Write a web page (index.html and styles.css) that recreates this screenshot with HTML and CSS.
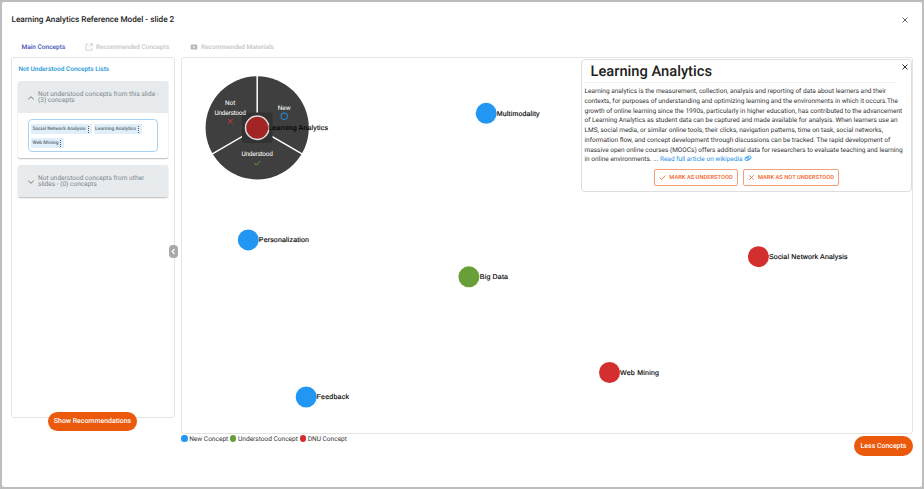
FILE: index.html
```html
<!DOCTYPE html>
<html lang="en">
<head>
<meta charset="utf-8">
<title>Learning Analytics Reference Model</title>
<link rel="stylesheet" href="styles.css">
</head>
<body>
<main class="dialog">
  <header class="dialog-header">
    <h1>Learning Analytics Reference Model - slide 2</h1>
    <svg class="close" viewBox="0 0 8 8"><path d="M1.5 1.5l5 5M6.500 1.500l-5 5"/></svg>
  </header>
  <nav class="tabs">
    <span class="tab active">Main Concepts</span>
    <span class="tab concepts"><svg viewBox="0 0 8 8"><path d="M3.500 1.200H1v6h6V4.600M4.800.8h2.500v2.500M7.200.9L4 4.100"/></svg>Recommended Concepts</span>
    <span class="tab materials"><svg viewBox="0 0 8 8"><rect class="solid" x=".7" y="1.500" width="6.600" height="5" rx="1.200"/><path class="play" d="M3.200 2.800v2.400l2-1.200z"/></svg>Recommended Materials</span>
  </nav>
  <div class="content">
    <aside class="side">
      <section class="lists">
        <h2>Not Understood Concepts Lists</h2>
        <div class="accordion">
          <div class="accordion-head"><svg viewBox="0 0 8 8"><path d="M1.300 5.300L4 2.700l2.700 2.600"/></svg><span>Not understood concepts from this slide -<br>(3) concepts</span></div>
          <div class="accordion-body">
            <div class="chips">
              <span class="chip">Social Network Analysis<i></i></span>
              <span class="chip">Learning Analytics<i></i></span>
              <span class="chip">Web Mining<i></i></span>
            </div>
          </div>
        </div>
        <div class="accordion">
          <div class="accordion-head"><svg viewBox="0 0 8 8"><path d="M1.300 2.700L4 5.300l2.700-2.600"/></svg><span>Not understood concepts from other<br>slides - (0) concepts</span></div>
        </div>
      </section>
      <button class="pill show">Show Recommendations</button>
      <svg class="collapse" viewBox="0 0 9 13"><rect width="9" height="13" rx="4"/><path d="M5.500 4L3.200 6.500 5.500 9"/></svg>
    </aside>
    <section class="main">
      <div class="canvas">
        <svg class="graph" viewBox="181 57 732 377">
          <circle class="wheel" cx="257.200" cy="127.800" r="51.600"/>
          <path class="spokes" d="M257.200 127.800V76M257.200 127.800l-44.800 26M257.200 127.800l44.800 26"/>
          <rect class="halo" x="242" y="112.500" width="30.500" height="30.500" rx="3"/>
          <circle class="selected" cx="257.200" cy="127.700" r="11.700"/>
          <g class="wheel-text">
            <text x="230.200" y="104.700">Not</text>
            <text x="230.200" y="114.500" textLength="31.500">Understood</text>
            <text x="284.200" y="109.600">New</text>
            <text x="257.200" y="156.300" textLength="31.500">Understood</text>
          </g>
          <path class="mark-no" d="M227.900 118.900l4.800 4.800m0-4.800l-4.800 4.800"/>
          <circle class="mark-new" cx="284.200" cy="116.300" r="3.200"/>
          <path class="mark-yes" d="M254.200 163.200l2 2 4-4.200"/>
          <circle class="new" cx="486.200" cy="113.300" r="10.500"/>
          <circle class="new" cx="248.300" cy="239.900" r="10.500"/>
          <circle class="new" cx="306.200" cy="397" r="10.500"/>
          <circle class="understood" cx="468.900" cy="276.800" r="10.500"/>
          <circle class="dnu" cx="758.400" cy="256.700" r="10.500"/>
          <circle class="dnu" cx="609.500" cy="372.500" r="10.500"/>
          <g class="labels">
            <text x="268.200" y="130.100" textLength="59.800">Learning Analytics</text>
            <text x="496.800" y="115.900" textLength="42.800">Multimodality</text>
            <text x="258.800" y="242.400" textLength="50.200">Personalization</text>
            <text x="316.500" y="399.300" textLength="32.400">Feedback</text>
            <text x="479.800" y="279.200" textLength="28.200">Big Data</text>
            <text x="769" y="259.100" textLength="78.400">Social Network Analysis</text>
            <text x="620" y="375" textLength="39">Web Mining</text>
          </g>
        </svg>
        <article class="info">
          <div class="info-head"><h2>Learning Analytics</h2><svg class="close dark" viewBox="0 0 8 8"><path d="M1.500 1.500l5 5M6.500 1.500l-5 5"/></svg></div>
          <p>Learning analytics is the measurement, collection, analysis and reporting of data about learners and their<br>contexts, for purposes of understanding and optimizing learning and the environments in which it occurs.The<br>growth of online learning since the 1990s, particularly in higher education, has contributed to the advancement<br>of Learning Analytics as student data can be captured and made available for analysis. When learners use an<br>LMS, social media, or similar online tools, their clicks, navigation patterns, time on task, social networks,<br>information flow, and concept development through discussions can be tracked. The rapid development of<br>massive open online courses (MOOCs) offers additional data for researchers to evaluate teaching and learning<br>in online environments. ... <a>Read full article on wikipedia <svg viewBox="0 0 8 7"><g transform="rotate(-12 4 3.500)"><rect x=".8" y="2.200" width="4.400" height="3" rx="1.500"/><rect x="2.800" y="1.400" width="4.400" height="3" rx="1.500"/></g></svg></a></p>
          <div class="actions">
            <button class="outline"><svg viewBox="0 0 8 8"><path d="M1 4.300l2 2 4.200-4.400"/></svg>MARK AS UNDERSTOOD</button>
            <button class="outline second"><svg viewBox="0 0 8 8"><path d="M1.500 1.500l5 5m0-5l-5 5"/></svg>MARK AS NOT UNDERSTOOD</button>
          </div>
        </article>
      </div>
      <footer class="footer">
        <div class="legend"><span class="dot blue"></span><span>New Concept</span><span class="dot green"></span><span>Understood Concept</span><span class="dot red"></span><span>DNU Concept</span></div>
        <button class="pill less">Less Concepts</button>
      </footer>
    </section>
  </div>
</main>
</body>
</html>
```
FILE: styles.css
```css
* { box-sizing: border-box; }
body {
  margin: 0;
  height: 489px;
  padding: 2px;
  overflow: hidden;
  background: #bdbdbd;
  font-family: Roboto, sans-serif;
  text-rendering: geometricPrecision;
  color: #333;
}
h1, h2, p { margin: 0; }
button { font-family: inherit; padding: 0; text-rendering: inherit; }
svg { fill: none; flex: none; }
.dialog { height: 485px; background: #fff; border-radius: 2px; overflow: hidden; }
.dialog-header {
  height: 35px;
  padding: 0 13px 0 9.500px;
  display: flex;
  align-items: center;
  justify-content: space-between;
}
.dialog-header h1 { font-size: 8.200px; font-weight: 500; color: #222; }
.close { width: 8px; height: 8px; stroke: #666; stroke-width: 1; }
.close.dark { stroke: #333; }
.tabs { height: 20px; display: flex; align-items: center; padding-left: 19.500px; font-size: 6.520px; font-weight: 500; }
.tab { display: flex; align-items: center; color: #c4c4c4; white-space: nowrap; }
.tab.active { width: 63px; color: #3f51b5; }
.tab.concepts { width: 105px; }
.tab svg { width: 8px; height: 8px; margin-right: 3.500px; stroke: #c8c8c8; stroke-width: .8; }
.tab .solid { fill: #b8b8b8; stroke: none; }
.tab .play { fill: #fff; stroke: none; }
.content { display: flex; gap: 6px; padding: 0 9px; }
.side { position: relative; width: 164px; }
.lists { height: 361px; padding: 7px 6px; border: 1px solid #e4e4e4; border-radius: 3px; }
.lists h2 { height: 16px; padding-left: .5px; font-size: 6.500px; line-height: 9px; font-weight: 500; color: #2196d8; }
.accordion { margin-bottom: 7px; border-radius: 2px; box-shadow: 0 1px 1.500px #bbb; overflow: hidden; }
.accordion-head {
  height: 32px;
  padding-left: 9px;
  display: flex;
  align-items: center;
  gap: 3px;
  background: #e8ebee;
  color: #7c858b;
  font-size: 6.550px;
  line-height: 6.500px;
  white-space: nowrap;
}
.accordion-head svg { width: 8px; height: 8px; margin-top: 1px; stroke: #777; stroke-width: 1; }
.accordion-body { height: 45px; padding: 6px 10px; }
.chips { height: 33px; padding: 4px 2px; border: 1px solid #a8d3f5; border-radius: 4px; display: flex; flex-wrap: wrap; gap: 4px 2px; align-content: flex-start; }
.chip { height: 10px; padding: 0 1.500px; display: flex; align-items: center; gap: 2px; background: #e0effa; color: #707b84; font-size: 4.900px; font-weight: 700; white-space: nowrap; }
.chip i { width: 2.500px; height: 7px; border-left: 1.500px dotted #555; }
.pill { display: block; border: 0; background: #ea590c; color: #fff; font-weight: 500; white-space: nowrap; }
.show { position: relative; width: 89px; height: 18.500px; margin: -6px 0 0 37px; border-radius: 10px; font-size: 6.950px; }
.collapse { position: absolute; left: 158px; top: 188px; width: 9px; height: 13px; fill: #a9a9a9; }
.collapse path { fill: none; stroke: #fff; stroke-width: 1.200; }
.main { width: 732px; }
.canvas { position: relative; height: 377px; border: 1px solid #e4e4e4; border-radius: 3px; }
.graph { display: block; width: 732px; height: 377px; margin: -1px; }
.wheel { fill: #3f3f3f; }
.spokes { stroke: #fff; stroke-width: 1.500; }
.halo { fill: #323232; }
.selected { fill: #a32424; stroke: #ddd; stroke-width: 1.500; }
.wheel-text { fill: #fff; font-size: 6.500px; text-anchor: middle; }
.mark-no { stroke: #e03030; stroke-width: 1; }
.mark-new { stroke: #2480c8; stroke-width: 1.100; }
.mark-yes { stroke: #689f38; stroke-width: 1; }
.new { fill: #2196f3; }
.understood { fill: #689f38; }
.dnu { fill: #d32f2f; }
.labels { fill: #000; stroke: #000; stroke-width: .15; font-family: "Liberation Sans", sans-serif; font-size: 7px; }
.info { position: absolute; left: 399px; top: 1px; width: 331px; height: 133px; background: #fff; border: 1px solid #dedede; border-radius: 4px; }
.info-head { height: 23px; margin: 0 14px 0 2px; border-bottom: 1px solid #f0f0f0; display: flex; justify-content: space-between; align-items: center; }
.info-head h2 { padding-left: 6.500px; font-size: 14.700px; line-height: 20px; font-weight: 500; color: #222; }
.info-head .close { margin: -9px -12px 0 0; }
.info p { padding: 4px 0 0 2.500px; font-size: 6.500px; line-height: 9.780px; color: #333; white-space: nowrap; }
.info a { color: #1e8fe1; }
.info a svg { width: 8px; height: 7px; margin-left: -.5px; vertical-align: -1px; stroke: #2196f3; stroke-width: .8; }
.actions { display: flex; justify-content: center; gap: 5px; margin-top: 4px; }
.outline { width: 84px; height: 17px; background: #fff; border: 1px solid #f3a079; border-radius: 2px; display: flex; align-items: center; justify-content: center; gap: 3px; color: #f1652b; font-size: 5.750px; font-weight: 500; white-space: nowrap; }
.outline.second { width: 96px; }
.outline svg { width: 7px; height: 7px; stroke: #ee612a; stroke-width: .9; }
.footer { display: flex; justify-content: space-between; }
.legend { height: 10px; display: flex; align-items: center; font-size: 6.550px; white-space: nowrap; }
.dot { width: 6.500px; height: 6.500px; margin: -1px 1.700px 0; border-radius: 50%; }
.dot:first-child { margin-left: 0; }
.blue { background: #2196f3; }
.green { background: #689f38; }
.red { background: #d32f2f; }
.less { width: 59px; height: 20px; margin-top: 2px; border-radius: 10px; font-size: 6.950px; }
```
